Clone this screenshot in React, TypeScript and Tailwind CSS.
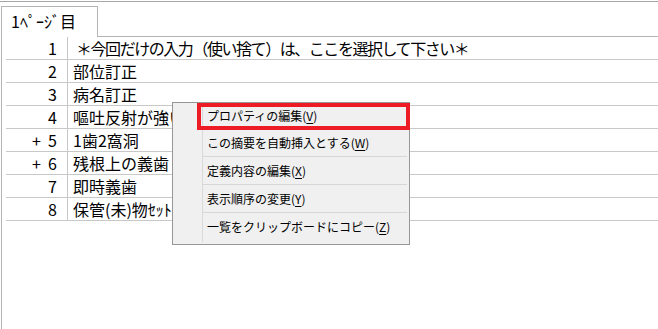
import React from 'react';

const rows = [
  { no: '1', text: '＊今回だけの入力（使い捨て）は、ここを選択して下さい＊', tight: true },
  { no: '2', text: '部位訂正' },
  { no: '3', text: '病名訂正' },
  { no: '4', text: '嘔吐反射が強い' },
  { no: '+  5', text: '1歯2窩洞' },
  { no: '+  6', text: '残根上の義歯' },
  { no: '7', text: '即時義歯' },
  { no: '8', text: '保管(未)物ｾｯﾄ' },
];

const menuItems = [
  { label: 'プロパティの編集(', key: 'V' },
  { label: 'この摘要を自動挿入とする(', key: 'W' },
  { label: '定義内容の編集(', key: 'X' },
  { label: '表示順序の変更(', key: 'Y' },
  { label: '一覧をクリップボードにコピー(', key: 'Z' },
];

const App: React.FC = () => {
  return (
    <div
      className="relative w-[658px] h-[329px] bg-white overflow-hidden text-black flex flex-col"
      style={{ fontFamily: '"Noto Sans CJK JP", "Noto Sans", sans-serif' }}
    >
      {/* top edge */}
      <div className="mt-[1px] h-[5px] border-t border-[#a6a6a6]" />

      {/* tab strip */}
      <div className="flex h-[31px]">
        <div className="ml-[1px] w-[97px] border-l border-t border-r border-[#b4b4b4] pl-[9px] text-[16px] leading-[29px]">
          1ﾍﾟｰｼﾞ目
        </div>
        <div className="flex-1 border-b border-[#b4b4b4]" />
      </div>

      {/* grid */}
      <div className="ml-[1px] flex-1 border-l border-[#b4b4b4] pl-[4px]">
        {rows.map((row) => (
          <div key={row.no} className="flex h-[23px] border-b border-[#c8c8c8]">
            <div className="w-[62px] shrink-0 border-r border-[#c8c8c8] pr-[10px] text-right text-[16px] leading-[22px] whitespace-pre">
              {row.no}
            </div>
            <div
              className={`text-[16px] leading-[22px] whitespace-nowrap ${row.tight ? 'pl-[8px] tracking-[-1.45px]' : 'pl-[5px]'}`}
            >
              {row.text}
            </div>
          </div>
        ))}
      </div>

      {/* context menu */}
      <div className="absolute left-[172px] top-[102px] w-[238px] h-[143px] border border-[#979797] bg-[#f0f0f0]">
        <div className="absolute left-[29px] top-0 bottom-[2px] w-px bg-[#d9d9d9]" />
        <div className="flex flex-col">
          {menuItems.map((item, i) => (
            <React.Fragment key={item.key}>
              {i > 0 && <div className="ml-[30px] mr-[2px] h-px bg-[#d7d7d7]" />}
              <div
                className={`${i === 0 ? 'h-[25px]' : 'h-[27px]'} flex items-center pl-[34px] text-[12px] whitespace-nowrap`}
              >
                {item.label}
                <span className="underline underline-offset-2">{item.key}</span>)
              </div>
            </React.Fragment>
          ))}
        </div>
        {/* highlight annotation */}
        <div className="absolute left-[24px] top-0 w-[213px] h-[27px] border-[4px] border-[#ed1c24]" />
      </div>
    </div>
  );
};

export default App;
